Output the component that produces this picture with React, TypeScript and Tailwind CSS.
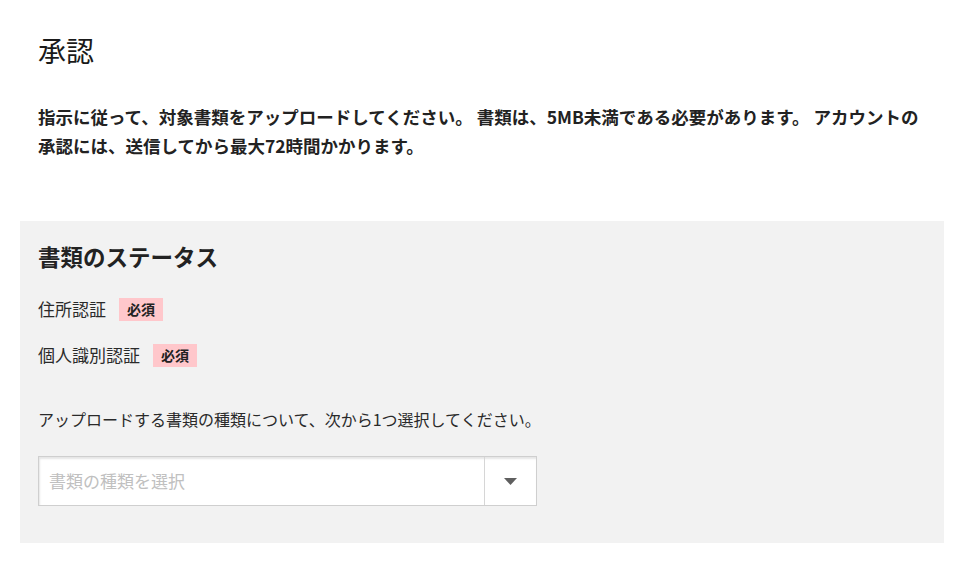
const font = { fontFamily: '"Noto Sans CJK JP", "Noto Sans", sans-serif' };

function RequiredBadge() {
  return (
    <span className="ml-[13px] inline-flex h-[23px] items-center bg-[#ffc7cb] px-[8px] text-[14px] font-bold text-[#222]">
      必須
    </span>
  );
}

export default function App() {
  return (
    <div className="min-h-[564px] w-[960px] bg-white text-[#222]" style={font}>
      <div className="pl-[38px] pr-[32px] pt-[30px]">
        <h1 className="text-[28px] leading-[40px] font-normal text-[#1a1a1a]">承認</h1>
        <p className="mt-[32px] text-[17.5px] leading-[29px] font-bold">
          指示に従って、対象書類をアップロードしてください。 書類は、5MB未満である必要があります。 アカウントの承認には、送信してから最大72時間かかります。
        </p>
      </div>

      <div className="mx-[20px] mt-[61px] h-[322px] w-[924px] bg-[#f2f2f2] px-[18px] pt-[20px]">
        <h2 className="text-[22.5px] leading-[30px] font-bold">書類のステータス</h2>

        <div className="mt-[26px] flex items-center text-[17px] leading-[24px] text-[#2a2a2a]">
          住所認証
          <RequiredBadge />
        </div>
        <div className="mt-[22px] flex items-center text-[17px] leading-[24px] text-[#2a2a2a]">
          個人識別認証
          <RequiredBadge />
        </div>

        <p className="mt-[40px] text-[16px] leading-[24px] text-[#2a2a2a]">
          アップロードする書類の種類について、次から1つ選択してください。
        </p>

        <div className="mt-[25px] flex h-[50px] w-[499px] border border-[#cfcfcf] bg-white shadow-[inset_1px_2px_2px_rgba(0,0,0,0.1)]">
          <div className="flex flex-1 items-center border-r border-[#d6d6d6] px-[10px] text-[17px] text-[#c0c0c0]">
            書類の種類を選択
          </div>
          <div className="flex w-[51px] items-center justify-center">
            <svg width="13" height="7" viewBox="0 0 13 7">
              <path d="M0 0 H13 L6.5 7 Z" fill="#5f5f5f" />
            </svg>
          </div>
        </div>
      </div>
    </div>
  );
}
